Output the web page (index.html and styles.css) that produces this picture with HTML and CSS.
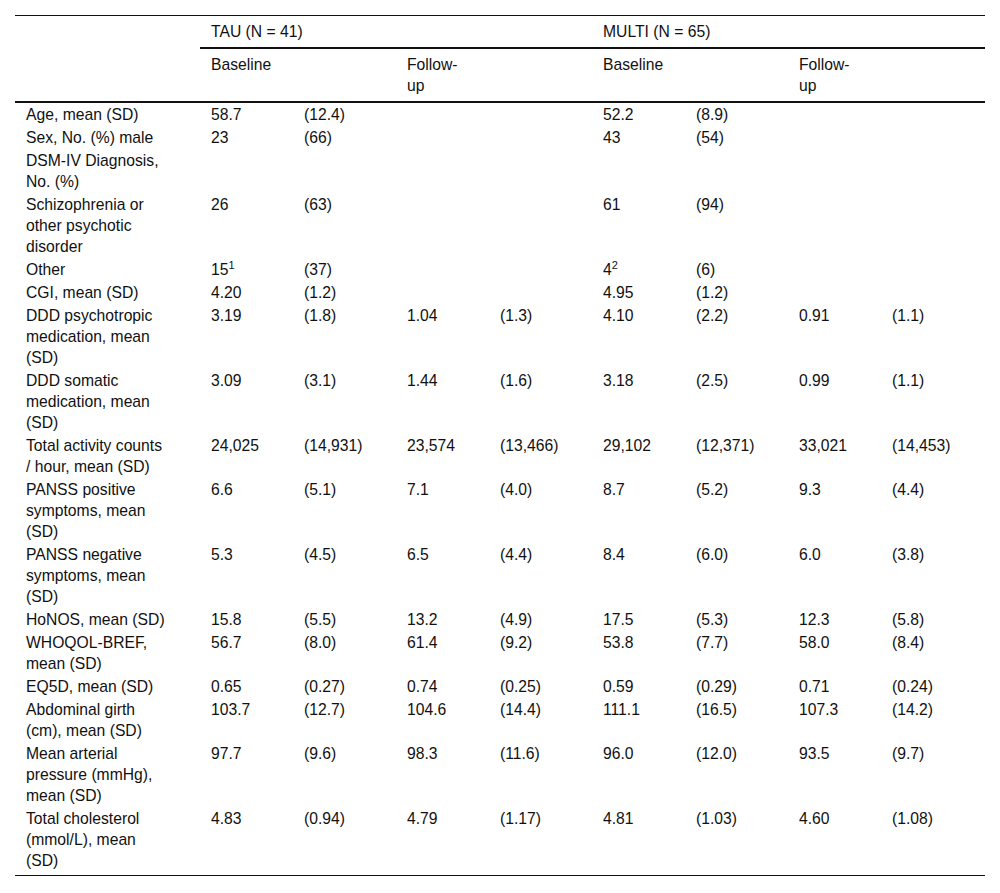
FILE: index.html
```html
<!DOCTYPE html>
<html lang="en">
<head>
<meta charset="utf-8">
<title>Table</title>
<link rel="stylesheet" href="styles.css">
</head>
<body>
<div class="page">
<table class="data">
  <colgroup>
    <col class="c-label">
    <col class="c-a"><col class="c-b"><col class="c-a"><col class="c-b">
    <col class="c-a"><col class="c-b"><col class="c-a"><col class="c-last">
  </colgroup>
  <thead>
    <tr class="h1">
      <th class="label" rowspan="2"></th>
      <th colspan="4" class="group">TAU (N = 41)</th>
      <th colspan="4" class="group">MULTI (N = 65)</th>
    </tr>
    <tr class="h2">
      <th colspan="2">Baseline</th>
      <th colspan="2" class="narrow">Follow-up</th>
      <th colspan="2">Baseline</th>
      <th colspan="2" class="narrow">Follow-up</th>
    </tr>
  </thead>
  <tbody>
    <tr><td class="label">Age, mean (SD)</td><td>58.7</td><td>(12.4)</td><td></td><td></td><td>52.2</td><td>(8.9)</td><td></td><td></td></tr>
    <tr><td class="label">Sex, No. (%) male</td><td>23</td><td>(66)</td><td></td><td></td><td>43</td><td>(54)</td><td></td><td></td></tr>
    <tr><td class="label">DSM-IV Diagnosis, No. (%)</td><td></td><td></td><td></td><td></td><td></td><td></td><td></td><td></td></tr>
    <tr><td class="label">Schizophrenia or other psychotic disorder</td><td>26</td><td>(63)</td><td></td><td></td><td>61</td><td>(94)</td><td></td><td></td></tr>
    <tr><td class="label">Other</td><td>15<sup>1</sup></td><td>(37)</td><td></td><td></td><td>4<sup>2</sup></td><td>(6)</td><td></td><td></td></tr>
    <tr><td class="label">CGI, mean (SD)</td><td>4.20</td><td>(1.2)</td><td></td><td></td><td>4.95</td><td>(1.2)</td><td></td><td></td></tr>
    <tr><td class="label">DDD psychotropic medication, mean (SD)</td><td>3.19</td><td>(1.8)</td><td>1.04</td><td>(1.3)</td><td>4.10</td><td>(2.2)</td><td>0.91</td><td>(1.1)</td></tr>
    <tr><td class="label">DDD somatic medication, mean (SD)</td><td>3.09</td><td>(3.1)</td><td>1.44</td><td>(1.6)</td><td>3.18</td><td>(2.5)</td><td>0.99</td><td>(1.1)</td></tr>
    <tr><td class="label">Total activity counts / hour, mean (SD)</td><td>24,025</td><td>(14,931)</td><td>23,574</td><td>(13,466)</td><td>29,102</td><td>(12,371)</td><td>33,021</td><td>(14,453)</td></tr>
    <tr><td class="label">PANSS positive symptoms, mean (SD)</td><td>6.6</td><td>(5.1)</td><td>7.1</td><td>(4.0)</td><td>8.7</td><td>(5.2)</td><td>9.3</td><td>(4.4)</td></tr>
    <tr><td class="label">PANSS negative symptoms, mean (SD)</td><td>5.3</td><td>(4.5)</td><td>6.5</td><td>(4.4)</td><td>8.4</td><td>(6.0)</td><td>6.0</td><td>(3.8)</td></tr>
    <tr><td class="label">HoNOS, mean (SD)</td><td>15.8</td><td>(5.5)</td><td>13.2</td><td>(4.9)</td><td>17.5</td><td>(5.3)</td><td>12.3</td><td>(5.8)</td></tr>
    <tr><td class="label">WHOQOL-BREF, mean (SD)</td><td>56.7</td><td>(8.0)</td><td>61.4</td><td>(9.2)</td><td>53.8</td><td>(7.7)</td><td>58.0</td><td>(8.4)</td></tr>
    <tr><td class="label">EQ5D, mean (SD)</td><td>0.65</td><td>(0.27)</td><td>0.74</td><td>(0.25)</td><td>0.59</td><td>(0.29)</td><td>0.71</td><td>(0.24)</td></tr>
    <tr><td class="label">Abdominal girth (cm), mean (SD)</td><td>103.7</td><td>(12.7)</td><td>104.6</td><td>(14.4)</td><td>111.1</td><td>(16.5)</td><td>107.3</td><td>(14.2)</td></tr>
    <tr><td class="label">Mean arterial pressure (mmHg), mean (SD)</td><td>97.7</td><td>(9.6)</td><td>98.3</td><td>(11.6)</td><td>96.0</td><td>(12.0)</td><td>93.5</td><td>(9.7)</td></tr>
    <tr class="last"><td class="label">Total cholesterol (mmol/L), mean (SD)</td><td>4.83</td><td>(0.94)</td><td>4.79</td><td>(1.17)</td><td>4.81</td><td>(1.03)</td><td>4.60</td><td>(1.08)</td></tr>
  </tbody>
</table>
</div>
</body>
</html>
```

FILE: styles.css
```css
html, body {
  margin: 0;
  padding: 0;
  background: #ffffff;
}

.page {
  padding: 15px;
}

.data {
  width: 970px;
  table-layout: fixed;
  border-collapse: collapse;
  font-family: "Liberation Sans", Arial, sans-serif;
  font-size: 15.7px;
  line-height: 21px;
  color: #111111;
}

.c-label { width: 185px; }
.c-a { width: 93px; }
.c-b { width: 103px; }
.c-last { width: 104px; }

.data th {
  font-weight: normal;
  text-align: left;
  vertical-align: top;
  padding: 5px 11px 5px 11px;
}

.data td {
  text-align: left;
  vertical-align: top;
  padding: 1px 11px 1px 11px;
}

.data .label {
  padding-right: 31px;
}

.h1 th {
  border-top: 1px solid #111111;
}

.h1 th.group {
  border-bottom: 2px solid #111111;
}

.h2 th,
.h1 th.label {
  border-bottom: 2px solid #111111;
}

.h2 th.narrow {
  padding-right: 140px;
}

.data tr.last td {
  padding-bottom: 4px;
  border-bottom: 1px solid #111111;
}

.data sup {
  font-size: 11px;
  line-height: 0;
  vertical-align: 6px;
}
```
